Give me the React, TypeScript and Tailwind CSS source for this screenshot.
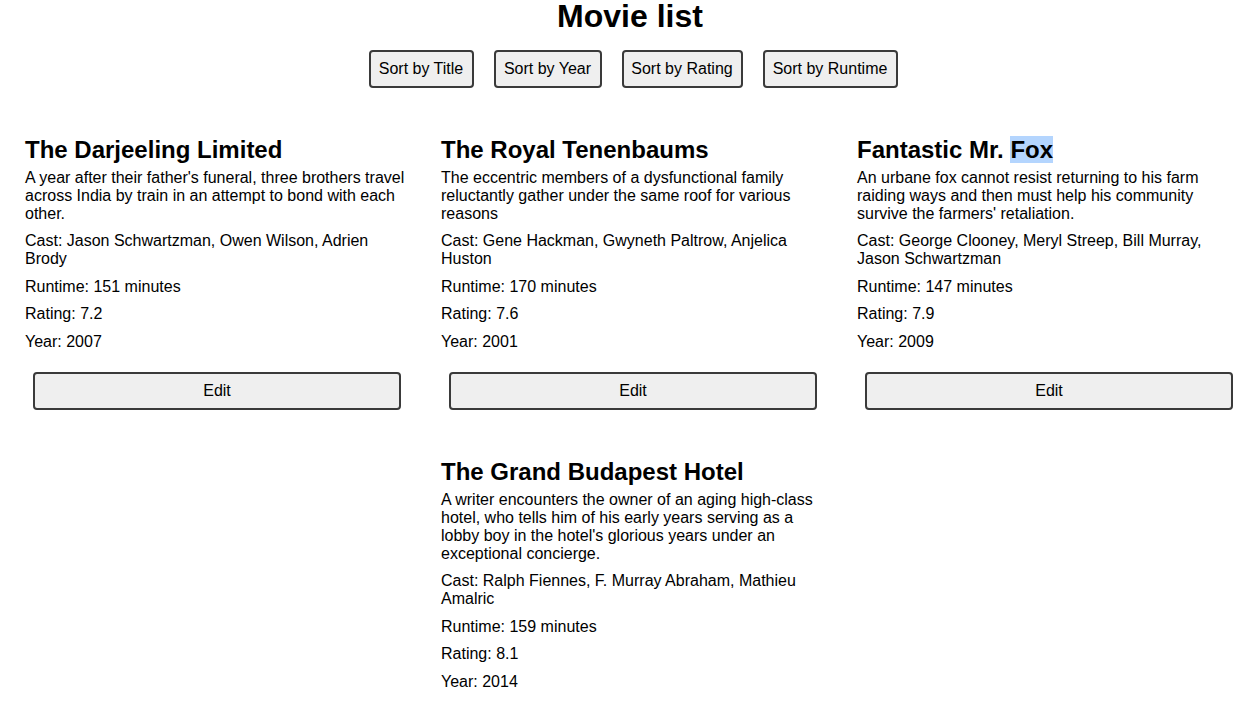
import React from "react";

type Movie = {
  title: React.ReactNode;
  desc: string;
  cast: string;
  runtime: number;
  rating: string;
  year: number;
};

const movies: Movie[] = [
  {
    title: "The Darjeeling Limited",
    desc: "A year after their father's funeral, three brothers travel across India by train in an attempt to bond with each other.",
    cast: "Jason Schwartzman, Owen Wilson, Adrien Brody",
    runtime: 151,
    rating: "7.2",
    year: 2007,
  },
  {
    title: "The Royal Tenenbaums",
    desc: "The eccentric members of a dysfunctional family reluctantly gather under the same roof for various reasons",
    cast: "Gene Hackman, Gwyneth Paltrow, Anjelica Huston",
    runtime: 170,
    rating: "7.6",
    year: 2001,
  },
  {
    title: (
      <>
        Fantastic Mr. <span className="bg-[#b4d5fe]">Fox</span>
      </>
    ),
    desc: "An urbane fox cannot resist returning to his farm raiding ways and then must help his community survive the farmers' retaliation.",
    cast: "George Clooney, Meryl Streep, Bill Murray, Jason Schwartzman",
    runtime: 147,
    rating: "7.9",
    year: 2009,
  },
  {
    title: "The Grand Budapest Hotel",
    desc: "A writer encounters the owner of an aging high-class hotel, who tells him of his early years serving as a lobby boy in the hotel's glorious years under an exceptional concierge.",
    cast: "Ralph Fiennes, F. Murray Abraham, Mathieu Amalric",
    runtime: 159,
    rating: "8.1",
    year: 2014,
  },
];

const btn =
  "h-[38px] border-2 border-[#3a3a3a] rounded-[4px] bg-[#efefef] text-black text-[16px] leading-[18px] text-center";

function Card({ m }: { m: Movie }) {
  return (
    <div className="w-[416px] px-4 pt-[23px] pb-[25px] flex flex-col leading-[18px]">
      <h2 className="text-[24px] font-bold leading-[1.15] mb-[5px]">{m.title}</h2>
      <p className="mb-[9.5px]">{m.desc}</p>
      <p className="mb-[9.5px]">Cast: {m.cast}</p>
      <p className="mb-[9.5px]">Runtime: {m.runtime} minutes</p>
      <p className="mb-[9.5px]">Rating: {m.rating}</p>
      <p className="mb-[9.5px]">Year: {m.year}</p>
      <button className={`${btn} mt-3 mx-2`}>Edit</button>
    </div>
  );
}

export default function App() {
  return (
    <div
      className="w-[1260px] bg-white text-black text-[16px] leading-[1.15]"
      style={{ fontFamily: '"Liberation Sans", Arial, Helvetica, sans-serif' }}
    >
      <h1 className="text-[32px] font-bold leading-none text-center">Movie list</h1>
      <div className="flex justify-center gap-5 mt-[18px] pl-[6px]">
        <button className={`${btn} w-[105px]`}>Sort by Title</button>
        <button className={`${btn} w-[108px]`}>Sort by Year</button>
        <button className={`${btn} w-[121px]`}>Sort by Rating</button>
        <button className={`${btn} w-[135px]`}>Sort by Runtime</button>
      </div>
      <div className="flex flex-wrap justify-center pl-[6px] mt-[25px]">
        {movies.map((m, i) => (
          <Card key={i} m={m} />
        ))}
      </div>
    </div>
  );
}
